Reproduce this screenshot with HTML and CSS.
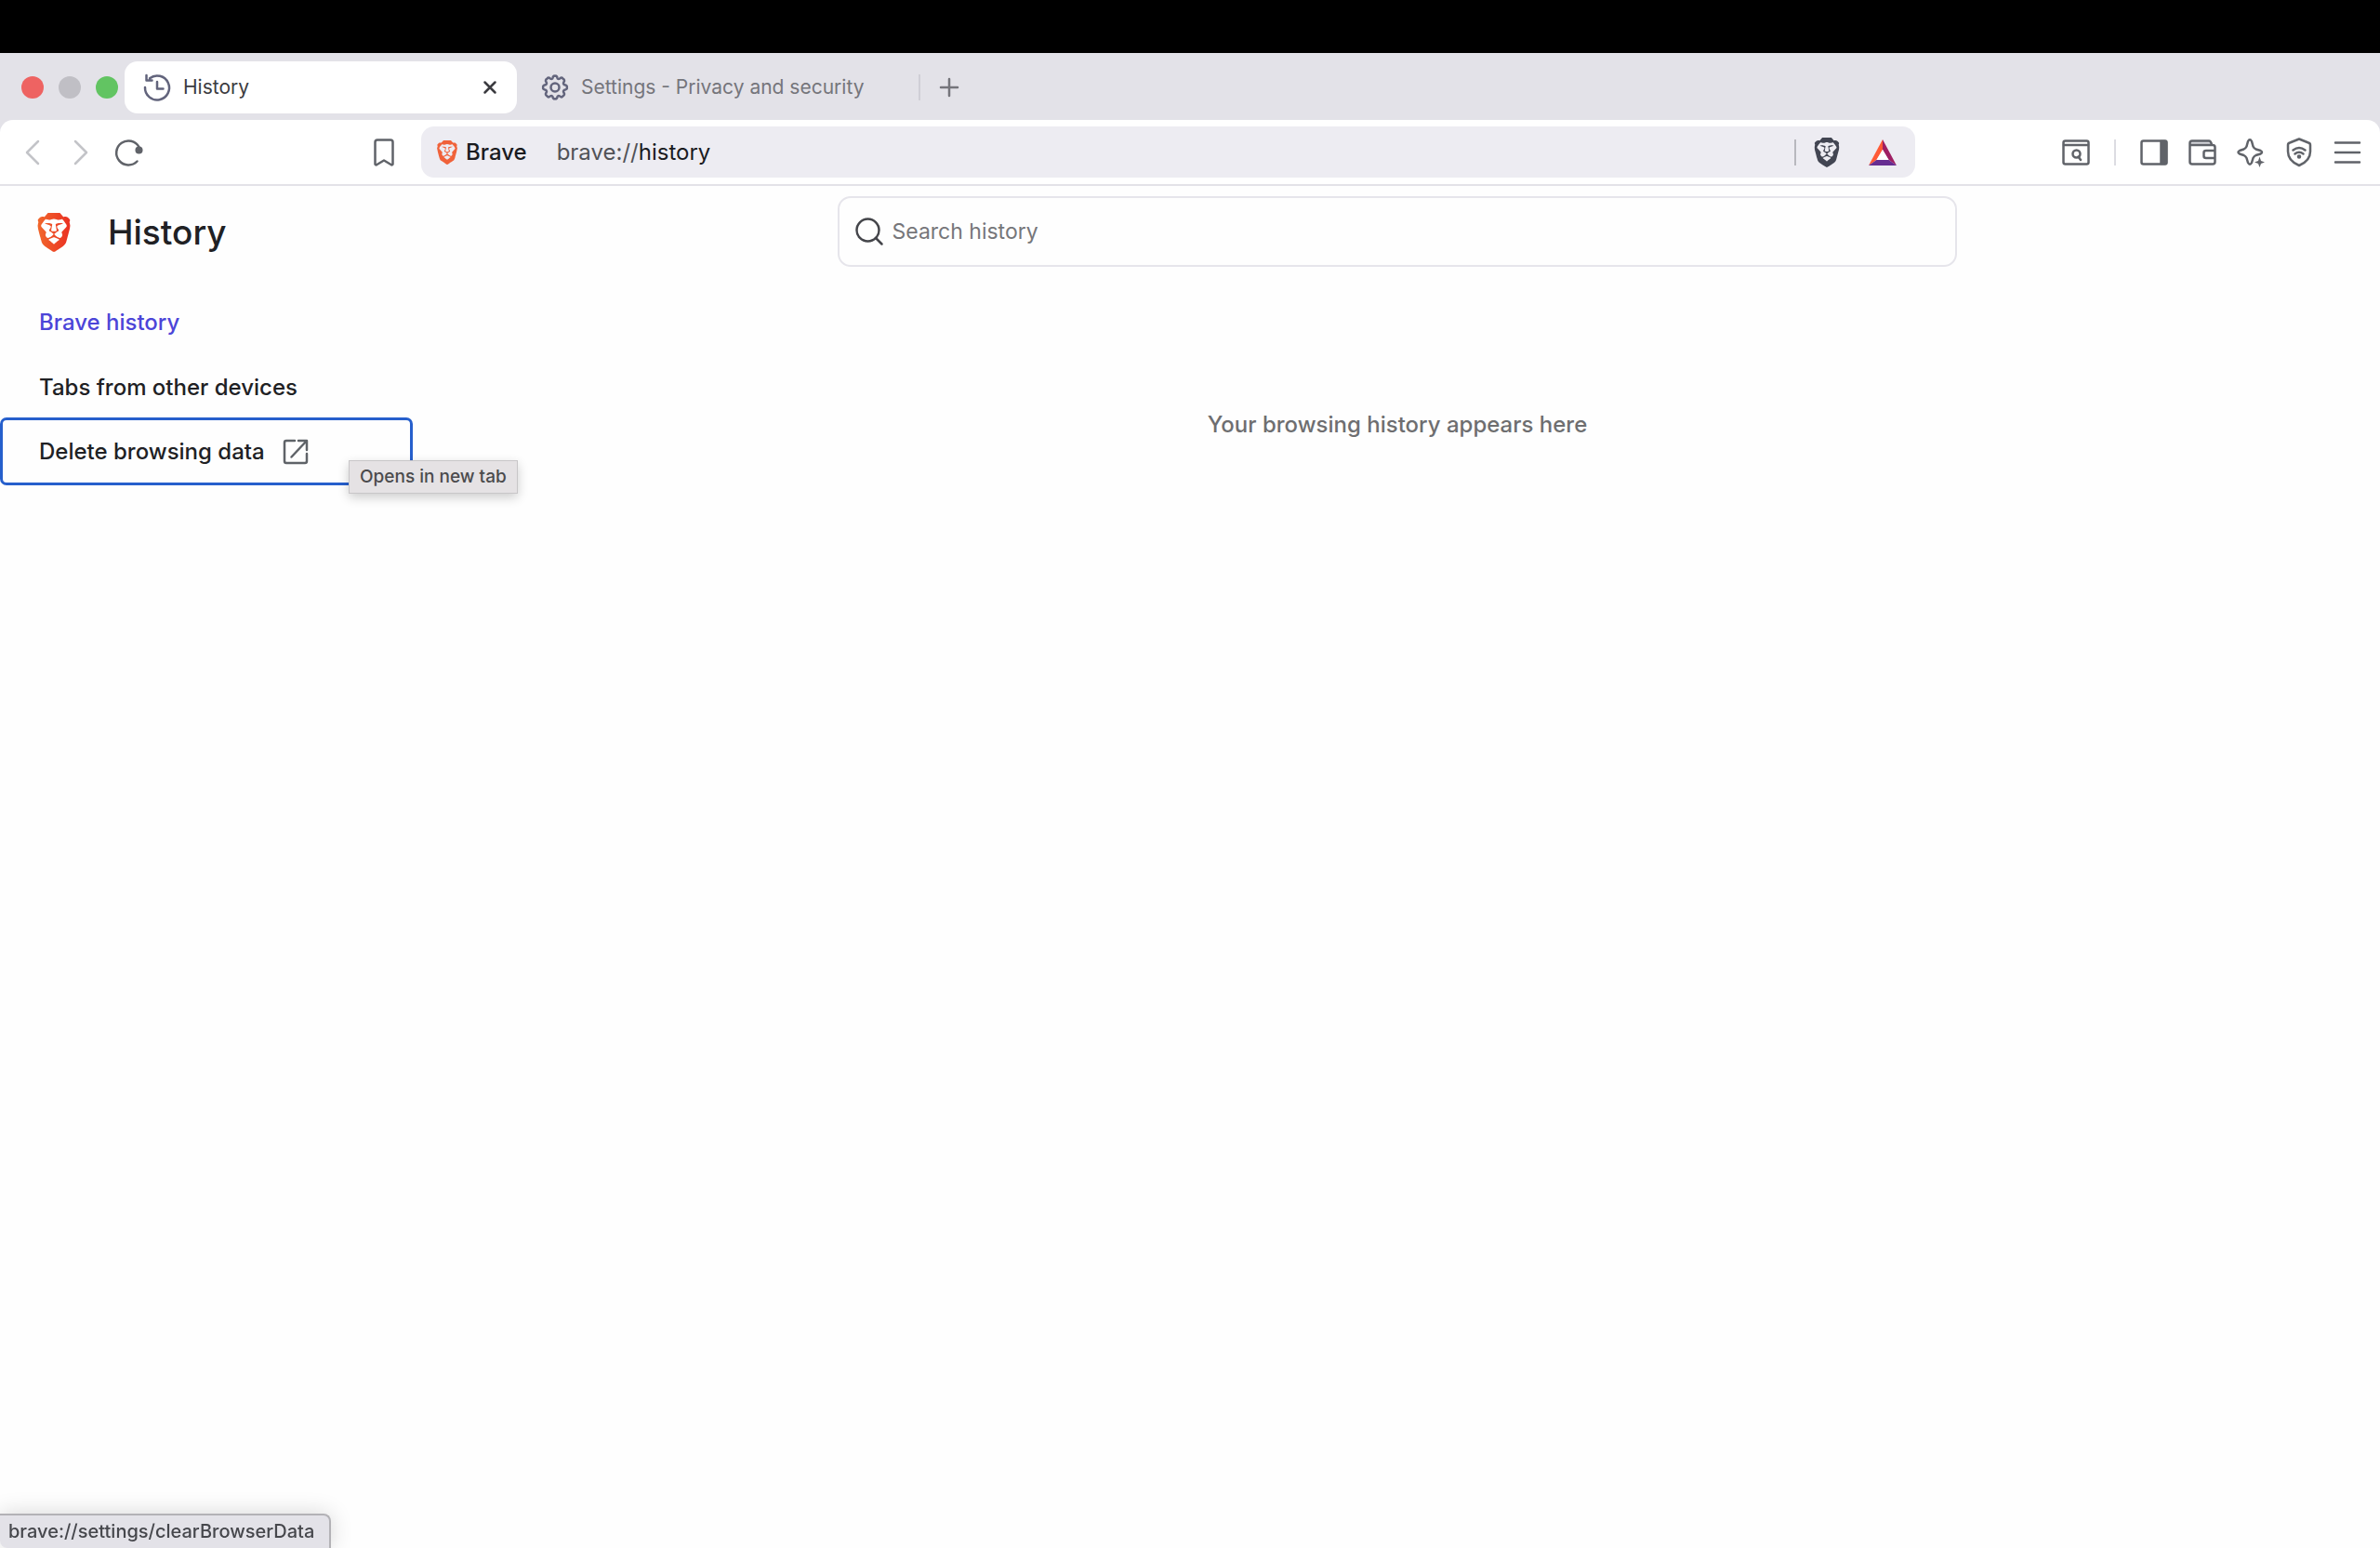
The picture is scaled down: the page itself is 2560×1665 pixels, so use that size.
FILE: index.html
```html
<!DOCTYPE html>
<html lang="en">
<head>
<meta charset="utf-8">
<title>History</title>
<link rel="stylesheet" href="styles.css">
</head>
<body>
<svg class="defs" width="0" height="0" aria-hidden="true">
  <defs>
    <linearGradient id="flame" x1="0" y1="0" x2="1" y2="0"><stop offset="0" stop-color="#f1682c"/><stop offset="1" stop-color="#ea2f22"/></linearGradient>
    <symbol id="lion" viewBox="2 0 20 24"><path d="M15.68 0l2.096 2.38s1.84-.512 2.709.358c.868.87 1.584 1.638 1.584 1.638l-.562 1.381.715 2.047s-2.104 7.98-2.35 8.955c-.486 1.919-.818 2.66-2.198 3.633-1.38.972-3.884 2.66-4.293 2.916-.409.256-.92.692-1.38.692-.46 0-.97-.436-1.38-.692a185.796 185.796 0 01-4.293-2.916c-1.38-.973-1.712-1.714-2.197-3.633-.247-.975-2.351-8.955-2.351-8.955l.715-2.047-.562-1.381s.716-.768 1.585-1.638c.868-.87 2.708-.358 2.708-.358L8.321 0h7.36zm-3.679 14.936c-.14 0-1.038.317-1.758.69-.72.373-1.242.637-1.409.742-.167.104-.065.301.087.409.152.107 2.194 1.69 2.393 1.866.198.175.489.464.687.464.198 0 .49-.29.688-.464.198-.175 2.24-1.759 2.392-1.866.152-.108.254-.305.087-.41-.167-.104-.689-.368-1.41-.741-.72-.373-1.617-.69-1.757-.69zm0-11.278s-.409.001-1.022.206-1.278.46-1.584.46c-.307 0-2.581-.434-2.581-.434S4.119 7.152 4.119 7.849c0 .697.339.881.68 1.243l2.02 2.149c.192.203.59.511.356 1.066-.235.555-.58 1.26-.196 1.977.384.716 1.042 1.194 1.464 1.115.421-.08 1.412-.598 1.776-.834.364-.237 1.518-1.19 1.518-1.554 0-.365-1.193-1.02-1.413-1.168-.22-.15-1.226-.725-1.247-.95-.02-.227-.012-.293.284-.851.297-.559.831-1.304.742-1.8-.089-.495-.95-.753-1.565-.986-.615-.232-1.799-.671-1.947-.74-.148-.068-.11-.133.339-.175.448-.043 1.719-.212 2.292-.052.573.16 1.552.403 1.632.532.079.13.149.134.067.579-.081.445-.5 2.581-.541 2.96-.04.38-.12.63.288.724.409.094 1.097.256 1.333.256s.924-.162 1.333-.256c.408-.093.329-.344.288-.723-.04-.38-.46-2.516-.541-2.961-.082-.445-.012-.45.067-.579.08-.129 1.059-.372 1.632-.532.573-.16 1.845.009 2.292.052.449.042.487.107.339.175-.148.069-1.332.508-1.947.74-.615.233-1.476.49-1.565.986-.09.496.445 1.241.742 1.8.297.558.304.624.284.85-.02.226-1.026.802-1.247.95-.22.15-1.413.804-1.413 1.169 0 .364 1.154 1.317 1.518 1.554.364.236 1.355.755 1.776.834.422.079 1.08-.4 1.464-1.115.384-.716.039-1.422-.195-1.977-.235-.555.163-.863.355-1.066l2.02-2.149c.341-.362.68-.546.68-1.243 0-.697-2.695-3.96-2.695-3.96s-2.274.436-2.58.436c-.307 0-.972-.256-1.585-.461-.613-.205-1.022-.206-1.022-.206z"/></symbol>
  </defs>
</svg>

<div class="screen-top"></div>

<header class="browser">
  <div class="tab-strip">
    <div class="lights">
      <span class="light light-close"></span>
      <span class="light light-min"></span>
      <span class="light light-max"></span>
    </div>
    <div class="tab tab-active">
      <svg class="icon tab-icon" viewBox="0 0 28 28"><path d="M1 14A13 13 0 1 0 6 4.200M2.500 1V6.500H8.500M14 8V15.500H20.500"/></svg>
      <span class="tab-title">History</span>
      <button class="tab-close" aria-label="Close tab"><svg class="icon" width="14" height="14" viewBox="0 0 14 14"><path d="M1.500 1.500l11 11M12.500 1.500l-11 11"/></svg></button>
    </div>
    <div class="tab">
      <svg class="icon tab-icon" viewBox="0 0 28 28"><path d="M11.500 3.800Q12 1 14 1.800Q16 1 16.500 3.800Q17 5.500 19 4.600Q21.500 2.500 22.500 4.700Q25 6 23.500 8.200Q22.200 10.300 24.300 11.300Q27.500 11.800 26.800 14Q27.500 16.200 24.300 16.700Q22.200 17.700 23.500 19.800Q25 22 22.500 23.300Q21.500 25.500 19 23.400Q17 22.500 16.500 24.200Q16 27 14 26.200Q12 27 11.500 24.200Q11 22.500 9 23.400Q6.500 25.500 5.500 23.300Q3 22 4.500 19.800Q5.800 17.700 3.700 16.700Q.5 16.200 1.200 14Q.5 11.800 3.700 11.300Q5.800 10.300 4.500 8.200Q3 6 5.500 4.700Q6.500 2.500 9 4.600Q11 5.500 11.500 3.800Z"/><circle cx="14" cy="14" r="4.500"/></svg>
      <span class="tab-title">Settings - Privacy and security</span>
    </div>
    <button class="new-tab" aria-label="New tab"><svg class="icon" width="20" height="20" viewBox="0 0 20 20"><path d="M10 1v18M1 10h18"/></svg></button>
  </div>

  <div class="toolbar">
    <div class="nav">
      <button aria-label="Back" class="dim"><svg class="icon" width="16" height="28" viewBox="0 0 16 28"><path d="M14 2L2 14l12 12"/></svg></button>
      <button aria-label="Forward" class="dim"><svg class="icon" width="16" height="28" viewBox="0 0 16 28"><path d="M2 2l12 12L2 26"/></svg></button>
      <button aria-label="Reload"><svg class="icon" width="30" height="30" viewBox="0 0 30 30"><path d="M23.500 24.500A13 13 0 1 1 25.500 9"/><circle class="solid" cx="25.500" cy="12.500" r="2.800"/></svg></button>
    </div>
    <button class="bookmark" aria-label="Bookmark this page"><svg class="icon" width="22" height="30" viewBox="0 0 22 30"><path d="M4 1.500H18Q20.500 1.500 20.500 4V27.500Q20 29 18.500 28L11 23.500L3.500 28Q2 29 1.500 27.500V4Q1.500 1.500 4 1.500Z"/></svg></button>
    <div class="address">
      <svg class="brand-small" viewBox="0 0 20 24"><use href="#lion"/></svg>
      <span class="brand-name">Brave</span>
      <span class="url">brave://<b>history</b></span>
      <span class="rule rule-dark"></span>
      <button class="shields" aria-label="Shields"><svg width="28" height="32" viewBox="0 0 20 24"><use href="#lion"/></svg></button>
      <button aria-label="Rewards"><svg width="30" height="28" viewBox="0 0 32 28" preserveAspectRatio="none"><path fill="#ff5a36" d="M16 0V11L9 22L0 28Z"/><path fill="#9e1f63" d="M16 0L32 28L23 22L16 11Z"/><path fill="#662d91" d="M0 28L9 22H23L32 28Z"/><path fill="#fff" d="M16 11L23 22H9Z"/></svg></button>
    </div>
    <div class="actions">
      <button aria-label="Search tabs"><svg class="icon" width="30" height="28" viewBox="0 0 30 28"><rect x="1.500" y="1.500" width="27" height="25" rx="2"/><path d="M2 6H28"/><circle cx="15.500" cy="15.500" r="4"/><path d="M17.500 18.500L20 22"/></svg></button>
      <span class="rule"></span>
      <button aria-label="Sidebar"><svg class="icon" width="30" height="28" viewBox="0 0 30 28"><rect x="1.500" y="1.500" width="27" height="25" rx="2"/><path class="solid" d="M22.500 2H28V26H22.500Z"/></svg></button>
      <button aria-label="Wallet"><svg class="icon" width="30" height="28" viewBox="0 0 30 28"><path class="pale" d="M3 2H23L26 6H3Z"/><path d="M1.500 4Q1.500 1.500 4 1.500H22Q24 1.500 25 5.500M3 6H26Q28.500 6 28.500 8.500V24Q28.500 26.500 26 26.500H4Q1.500 26.500 1.500 24V4M28.500 12H19Q16.500 12 16.500 14V18Q16.500 20 19 20H28.500"/></svg></button>
      <button aria-label="Leo AI"><svg class="icon" width="30" height="30" viewBox="0 0 30 30"><path d="M12 3Q14 -.5 16 3L17.500 8.500Q18.500 10.500 20.500 11.500L25.500 13Q28.500 14.500 25.500 16.500L20.500 18Q18.500 19 17.500 21L16 26Q14 29.500 12 26L10.500 21Q9.500 19 7.500 18L3 16.500Q0 14.500 3 13L7.500 11.500Q9.500 10.500 10.500 8.500Z"/><path fill="currentColor" stroke="none" d="M24.500 19.500L26 24L30 25.500L26 27L24.500 31L23 27L19 25.500L23 24Z"/></svg></button>
      <button aria-label="VPN"><svg class="icon" width="28" height="32" viewBox="0 0 28 32"><path d="M14 1.500L24 5.500Q26 6 26 8V15Q26 25 14 30Q2 25 2 15V8Q2 6 4 5.500Z"/><path d="M7.500 13.500Q14 8.500 20.500 13.500M9.500 17.500Q14 14 18.500 17.500"/><circle class="solid" cx="14" cy="20.500" r="1"/></svg></button>
      <button aria-label="Menu"><svg class="icon" width="28" height="24" viewBox="0 0 28 24"><path d="M1 1.500H27M1 12H27M1 22.500H27"/></svg></button>
    </div>
  </div>
</header>

<div class="page">
  <aside class="sidebar">
    <div class="page-title">
      <svg class="logo" viewBox="0 0 20 24"><use href="#lion" fill="url(#flame)"/></svg>
      <h1>History</h1>
    </div>
    <nav class="menu">
      <a href="#brave" class="current">Brave history</a>
      <a href="#tabs">Tabs from other devices</a>
      <a href="#delete" class="focused">Delete browsing data
        <svg class="icon" width="28" height="28" viewBox="0 0 28 28"><path d="M13 2H4Q2 2 2 4V24Q2 26 4 26H24Q26 26 26 24V16M9.500 19.500L25 3M17 2H26V12"/></svg>
        <span class="tooltip" role="tooltip">Opens in new tab</span>
      </a>
    </nav>
  </aside>
  <main class="content">
    <label class="search">
      <svg class="icon" width="30" height="30" viewBox="0 0 30 30"><circle cx="13.500" cy="13.500" r="12"/><path d="M22 22L28.500 28.500"/></svg>
      <input type="search" placeholder="Search history" aria-label="Search history">
    </label>
    <p class="empty">Your browsing history appears here</p>
  </main>
</div>

<div class="status">brave://settings/clearBrowserData</div>
</body>
</html>
```

FILE: styles.css
```css
* { box-sizing: border-box; }

body {
  margin: 0;
  min-height: 100vh;
  display: flex;
  flex-direction: column;
  background: #fefefe;
  color: #202124;
  font: 500 24px/32px Inter, "Liberation Sans", sans-serif;
}

button {
  display: flex;
  justify-content: center;
  padding: 0;
  border: 0;
  background: none;
  color: inherit;
}

svg { display: block; flex: none; }
.defs { position: absolute; }
.icon { fill: none; stroke: currentColor; stroke-width: 2.5; stroke-linecap: round; stroke-linejoin: round; overflow: visible; }
.icon .solid { fill: currentColor; }
.icon .pale { fill: #d4d5da; stroke: none; }

.screen-top { height: 57px; background: #000; }

/* Tab strip */
.browser { background: #e3e2e8; }
.tab-strip {
  display: flex;
  align-items: center;
  height: 72px;
  padding: 1px 0 0 23px;
  font-size: 21px;
  font-weight: 400;
  color: #75757b;
}
.lights { display: flex; gap: 16px; padding-right: 7px; }
.light { width: 24px; height: 24px; border-radius: 50%; }
.light-close { background: #ee6362; }
.light-min { background: #c0bfc5; }
.light-max { background: #62c462; }
.tab {
  display: flex;
  align-items: center;
  gap: 14px;
  width: 432px;
  height: 56px;
  padding: 0 22px 0 27px;
}
.tab-active { width: 422px; padding-left: 21px; border-radius: 14px; background: #fff; color: #3b3b40; }
.tab-icon { width: 28px; height: 28px; color: #62647c; }
.tab-title { flex: 1; white-space: nowrap; }
.new-tab { padding: 4px 21px; border-left: 2px solid #d0cfd6; color: #75757b; }

/* Toolbar */
.toolbar {
  display: flex;
  align-items: center;
  height: 71px;
  padding: 0 20px 0 27px;
  border-bottom: 2px solid #e3e2e8;
  border-radius: 14px 14px 0 0;
  background: #fff;
  color: #606369;
}
.nav { display: flex; align-items: center; gap: 36px; width: 375px; }
.nav button:last-child { margin-left: -7px; }
.dim { color: #c3c4c8; }
.bookmark { margin-right: 29px; }
.address {
  flex: 1;
  display: flex;
  align-items: center;
  height: 55px;
  padding: 0 20px 0 17px;
  border-radius: 14px;
  background: #edecf2;
  color: #1a1b1f;
}
.brand-small { width: 22px; height: 26px; margin-right: 9px; fill: #f0623a; }
.brand-name { margin-right: 32px; }
.url { flex: 1; color: #515257; font-weight: 400; }
.url b { color: #1a1b1f; font-weight: 400; }
.rule { width: 2px; height: 28px; background: #dcdce2; }
.rule-dark { background: #b8b8be; }
.shields { margin: 0 31px 0 19px; fill: #424552; }
.actions { display: flex; align-items: center; gap: 22px; padding-left: 158px; }
.actions button { width: 30px; }
.actions .rule { margin: 0 4px; }

/* History page */
.page { flex: 1; display: flex; }
.sidebar { width: 446px; }
.page-title { display: flex; align-items: center; gap: 40px; height: 100px; padding-left: 40px; }
.logo { width: 36px; height: 42px; }
h1 { margin: 0; font-size: 37px; font-weight: 500; line-height: 44px; }
.menu { padding-top: 12px; }
.menu a {
  display: flex;
  align-items: center;
  gap: 19px;
  height: 70px;
  padding-left: 42px;
  color: inherit;
  text-decoration: none;
}
.menu .current { color: #4c45d8; }
.menu .focused {
  position: relative;
  width: 444px;
  height: 73px;
  margin-top: -3px;
  padding-left: 39px;
  border: 3px solid #265fcc;
  border-radius: 7px;
}
.focused .icon { color: #5f6368; }
.tooltip {
  position: absolute;
  left: 372px;
  top: 43px;
  padding: 1px 11px;
  border: 1px solid #c8c6c8;
  background: #e5e2e4;
  box-shadow: 0 4px 12px rgba(0, 0, 0, .2);
  color: #4b4b4d;
  font-size: 19px;
  white-space: nowrap;
}

.content { flex: 1; display: flex; flex-direction: column; align-items: center; padding-top: 11px; }
.search {
  display: flex;
  align-items: center;
  gap: 10px;
  width: 57%;
  height: 76px;
  padding: 0 17px;
  border: 2px solid #e6e5eb;
  border-radius: 14px;
  color: #44454a;
}
.search input {
  flex: 1;
  padding: 0;
  border: 0;
  outline: 0;
  background: none;
  font: inherit;
  font-size: 23px;
  font-weight: 400;
}
.search input::placeholder { color: #76767a; opacity: 1; }
.empty { margin: 154px 0 0; color: #6e6e70; }

/* Link target shown at the window's lower edge */
.status {
  position: fixed;
  left: 0;
  bottom: 0;
  height: 37px;
  padding: 1px 16px 0 9px;
  border: 2px solid #b3b2b6;
  border-width: 2px 2px 0 0;
  border-radius: 0 8px 0 8px;
  background: #e3e2e8;
  box-shadow: 0 0 24px rgba(0, 0, 0, .16);
  color: #46474c;
  font-size: 20px;
}
```
